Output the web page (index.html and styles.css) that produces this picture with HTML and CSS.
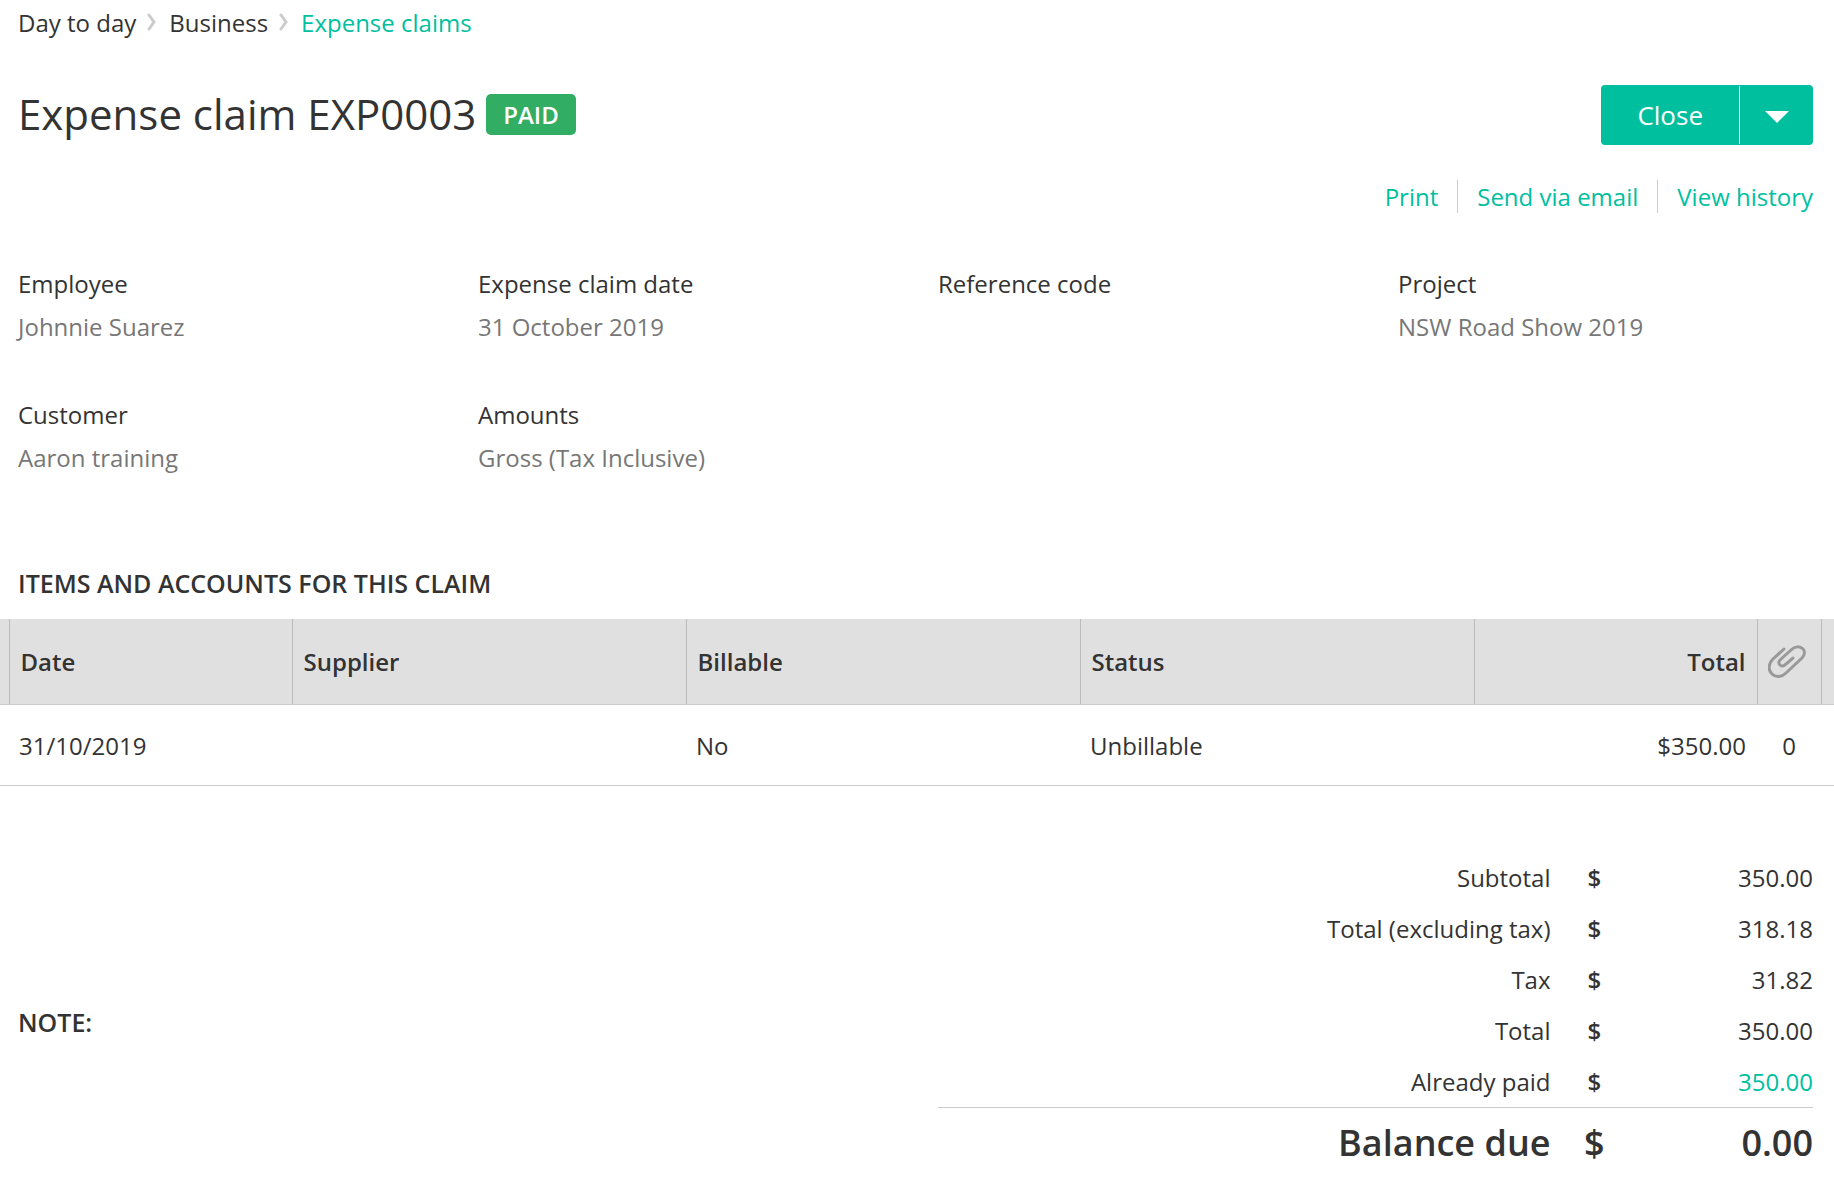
FILE: index.html
```html
<!DOCTYPE html>
<html lang="en">
<head>
    <meta charset="UTF-8">
    <meta name="viewport" content="width=device-width, initial-scale=1.0">
    <title>Expense claim EXP0003</title>
    <link rel="stylesheet" href="styles.css">
</head>
<body>

<nav class="breadcrumb">
    <a href="#day">Day to day</a>
    <svg class="chevron" viewBox="0 0 10 18" aria-hidden="true"><path d="M2 2l5 7-5 7"/></svg>
    <a href="#business">Business</a>
    <svg class="chevron" viewBox="0 0 10 18" aria-hidden="true"><path d="M2 2l5 7-5 7"/></svg>
    <a href="#claims" class="current">Expense claims</a>
</nav>

<header class="page-header">
    <h1>Expense claim EXP0003</h1>
    <span class="badge">PAID</span>
    <div class="split-button">
        <button type="button" class="close">Close</button>
        <button type="button" class="more" aria-label="More actions">
            <svg viewBox="0 0 24 12" aria-hidden="true"><path d="M0 0h24L12 12z"/></svg>
        </button>
    </div>
</header>

<ul class="actions">
    <li><a href="#print">Print</a></li>
    <li><a href="#email">Send via email</a></li>
    <li><a href="#history">View history</a></li>
</ul>

<main>
    <dl class="details">
        <div><dt>Employee</dt><dd>Johnnie Suarez</dd></div>
        <div><dt>Expense claim date</dt><dd>31 October 2019</dd></div>
        <div><dt>Reference code</dt><dd></dd></div>
        <div><dt>Project</dt><dd>NSW Road Show 2019</dd></div>
        <div><dt>Customer</dt><dd>Aaron training</dd></div>
        <div><dt>Amounts</dt><dd>Gross (Tax Inclusive)</dd></div>
    </dl>

    <h2 class="items-title">ITEMS AND ACCOUNTS FOR THIS CLAIM</h2>
    <table class="items">
        <colgroup>
            <col class="edge-left">
            <col class="narrow">
            <col>
            <col>
            <col>
            <col class="narrow">
            <col class="files">
            <col class="edge-right">
        </colgroup>
        <thead>
            <tr>
                <td></td>
                <th>Date</th>
                <th>Supplier</th>
                <th>Billable</th>
                <th>Status</th>
                <th class="amount">Total</th>
                <th class="attachments" aria-label="Attachments">
                    <svg viewBox="0 0 38 34" aria-hidden="true"><path d="M16 4L5 14C0 19 0 25 4 29C8 33 14 32 18 28L34 13C37 10 37 6 35 4C32 1 27 1 23 5L12 15C10 17 11 19 12 20C14 22 16 21 18 19L25 13"/></svg>
                </th>
                <td></td>
            </tr>
        </thead>
        <tbody>
            <tr>
                <td></td>
                <td>31/10/2019</td>
                <td></td>
                <td>No</td>
                <td>Unbillable</td>
                <td class="amount">$350.00</td>
                <td class="attachments">0</td>
                <td></td>
            </tr>
        </tbody>
    </table>

    <section class="summary">
        <h2 class="note">NOTE:</h2>
        <table class="totals">
            <tbody>
                <tr><th>Subtotal</th><td class="currency">$</td><td>350.00</td></tr>
                <tr><th>Total (excluding tax)</th><td class="currency">$</td><td>318.18</td></tr>
                <tr><th>Tax</th><td class="currency">$</td><td>31.82</td></tr>
                <tr><th>Total</th><td class="currency">$</td><td>350.00</td></tr>
                <tr><th>Already paid</th><td class="currency">$</td><td class="paid">350.00</td></tr>
            </tbody>
            <tfoot>
                <tr><th>Balance due</th><td class="currency">$</td><td>0.00</td></tr>
            </tfoot>
        </table>
    </section>
</main>

</body>
</html>
```
FILE: styles.css
```css
* {
    box-sizing: border-box;
}
body {
    font-family: "Open Sans", sans-serif;
    font-size: 24px;
    line-height: 32px;
    color: #333;
    background: #fff;
    margin: 0;
}
h1, h2, dl, dd, ul {
    margin: 0;
    padding: 0;
}
h2 {
    font-size: 25px;
    font-weight: 600;
    line-height: 36px;
}
a {
    color: #00bf9f;
    text-decoration: none;
}

/* Breadcrumb */
.breadcrumb {
    display: flex;
    padding: 7px 21px 0 18px;
}
.breadcrumb a {
    color: #333;
}
.breadcrumb .current {
    color: #00bf9f;
}
.chevron {
    width: 10px;
    height: 18px;
    margin: 6px 12px 0 11px;
    fill: none;
    stroke: #ccc;
    stroke-width: 3;
    stroke-linecap: round;
}

/* Title and buttons */
.page-header {
    display: flex;
    align-items: center;
    padding: 46px 21px 0 18px;
}
.page-header h1 {
    font-size: 42px;
    font-weight: 400;
    line-height: 58px;
    padding-bottom: 2px;
}
.badge {
    margin: 0 0 2px 10px;
    padding: 0 17px;
    border-radius: 5px;
    background: #32ad64;
    color: #fff;
    font-weight: 600;
    line-height: 41px;
}
.split-button {
    display: flex;
    height: 60px;
    margin-left: auto;
    border-radius: 4px;
    background: #00bf9f;
}
.split-button button {
    border: 0;
    background: none;
    color: #fff;
    font: inherit;
    cursor: pointer;
}
.split-button .close {
    padding: 0 36px;
    font-size: 26px;
}
.split-button .more {
    width: 74px;
    margin: 1px 0;
    padding: 0 0 0 1px;
    border-left: 1px solid #fff;
}
.more svg {
    display: block;
    width: 24px;
    height: 12px;
    margin: 4px auto 0;
    fill: #fff;
}
.actions {
    display: flex;
    justify-content: flex-end;
    list-style: none;
    margin-top: 35px;
    padding-right: 21px;
    line-height: 33px;
}
.actions li + li {
    margin-left: 19px;
    padding-left: 19px;
    border-left: 1px solid #ccc;
}

/* Claim details */
.details {
    display: grid;
    grid-template-columns: repeat(4, 1fr);
    gap: 45px;
    padding: 49px 21px 0 18px;
    line-height: 43px;
}
.details dd {
    color: #777;
}

/* Items table */
.items-title {
    padding: 86px 18px 18px;
}
table {
    width: 100%;
    border-collapse: collapse;
    table-layout: fixed;
}
.items th, .items td {
    height: 81px;
    padding: 2px 11px 0 10px;
    border-bottom: 1px solid #ccc;
    text-align: left;
}
.items thead tr {
    background: #e0e0e0;
}
.items thead th, .items thead td {
    height: 85px;
    padding: 1px 11px 0;
    font-weight: 600;
}
.items thead th, .items thead td:last-child {
    border-left: 1px solid #bbb;
}
.items .edge-left {
    width: 9px;
}
.items .narrow {
    width: 283px;
}
.items .files {
    width: 64px;
}
.items .edge-right {
    width: 13px;
}
.items .amount {
    text-align: right;
}
.items .attachments {
    padding-left: 0;
    padding-right: 0;
    text-align: center;
}
.items thead .attachments {
    padding-right: 4px;
}
.attachments svg {
    display: block;
    width: 38px;
    height: 34px;
    margin: 0 auto;
    fill: none;
    stroke: #999;
    stroke-width: 3;
    stroke-linecap: round;
}

/* Note and totals */
.summary {
    display: grid;
    grid-template-columns: 1fr 1fr;
    gap: 45px;
    padding: 67px 21px 0 18px;
}
.note {
    padding-top: 151px;
}
.totals th, .totals td {
    height: 51px;
    padding: 0;
    font-weight: 400;
    text-align: right;
}
.totals th {
    width: 70%;
}
.totals .currency {
    width: 10%;
    font-weight: 600;
    text-align: center;
}
.totals .paid {
    color: #00bf9f;
}
.totals tfoot {
    border-top: 1px solid #ccc;
    font-size: 36px;
}
.totals tfoot th, .totals tfoot td {
    height: 69px;
    padding-top: 2px;
    font-weight: 600;
}
```
